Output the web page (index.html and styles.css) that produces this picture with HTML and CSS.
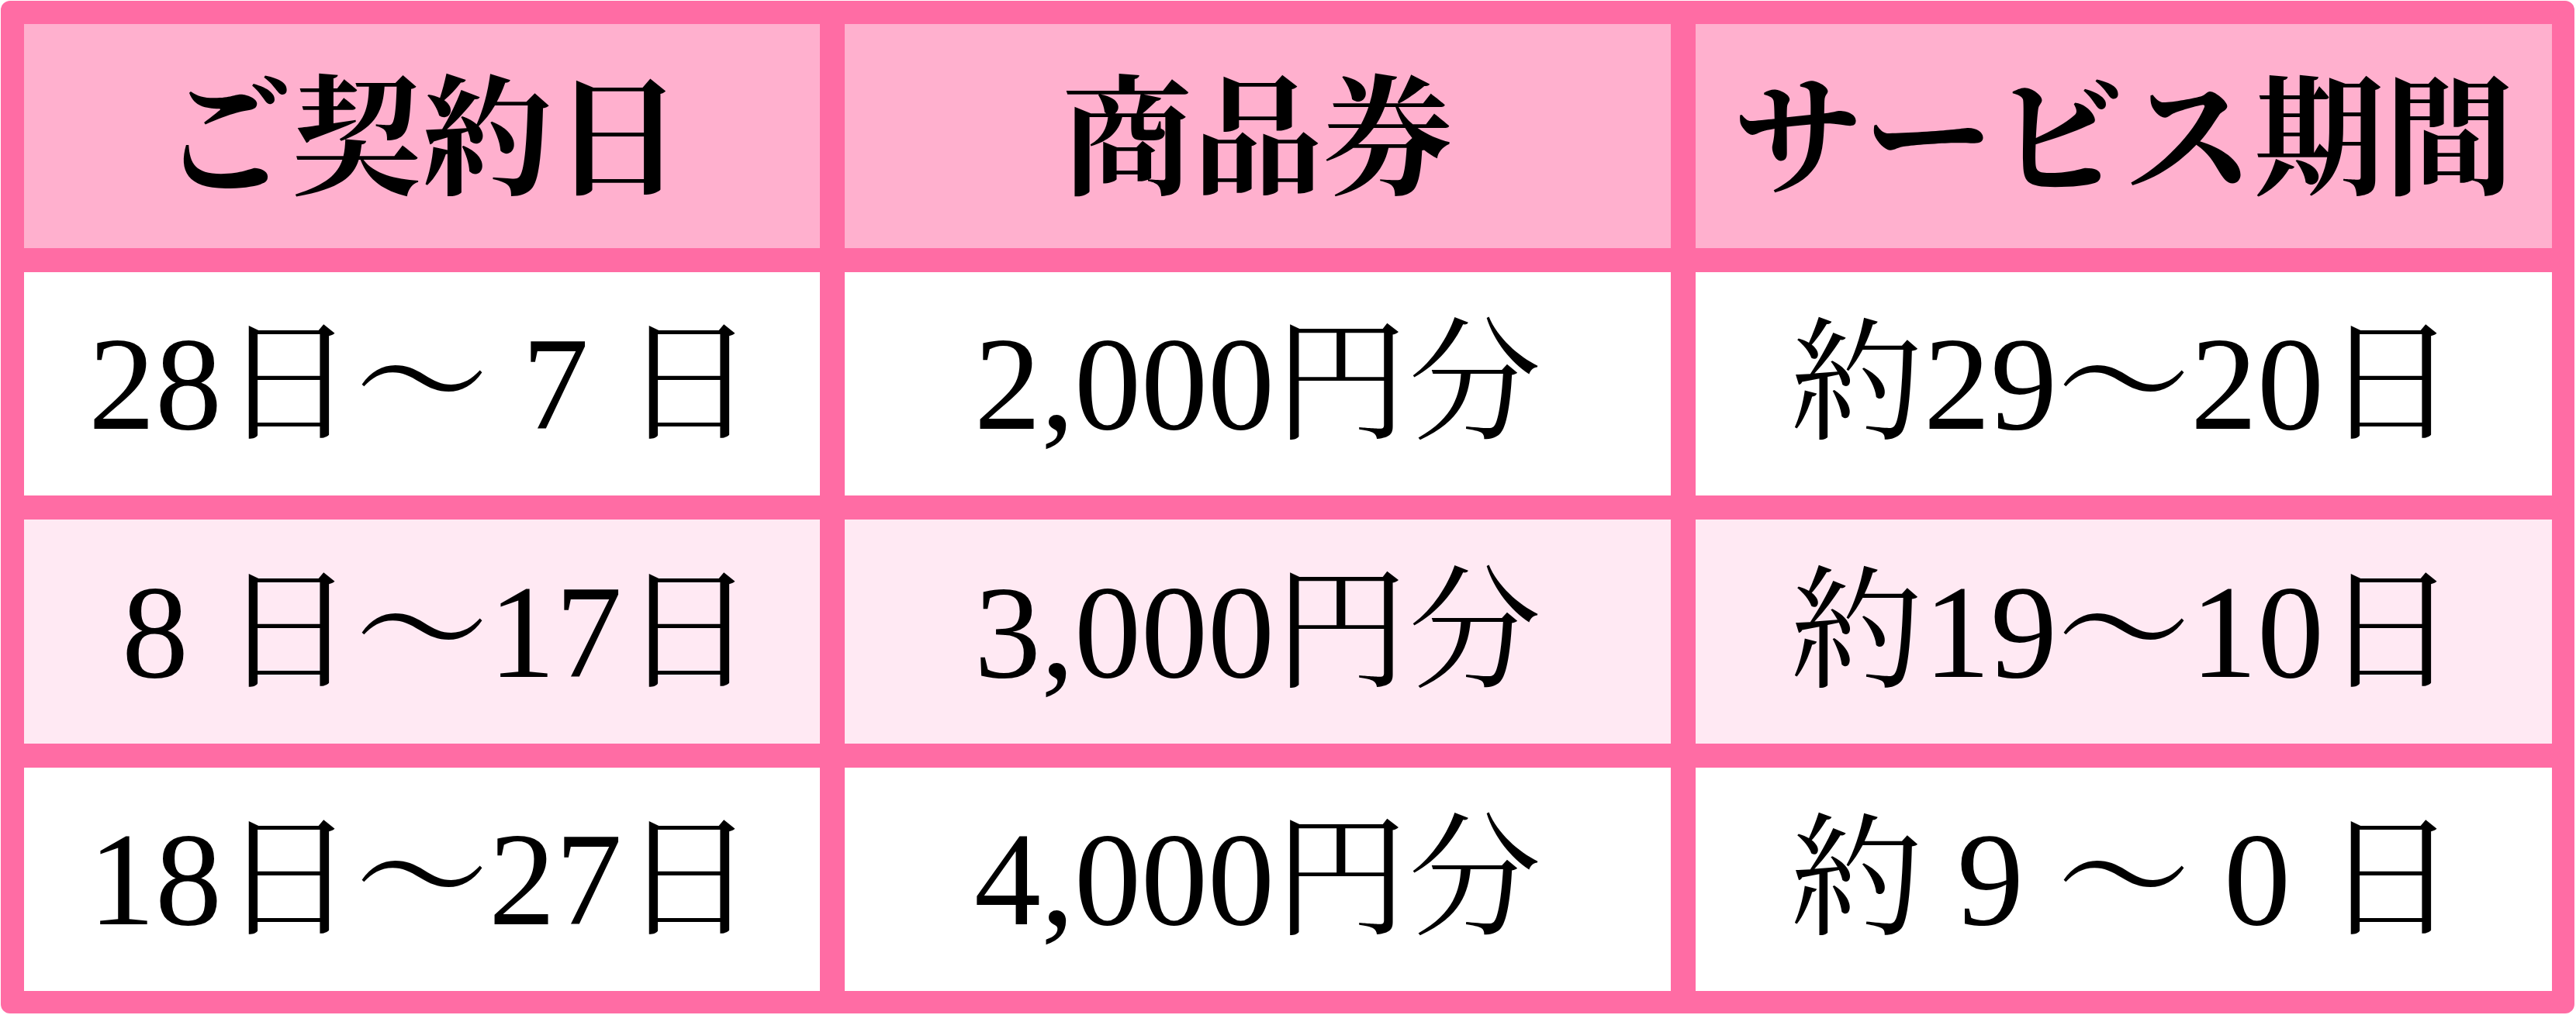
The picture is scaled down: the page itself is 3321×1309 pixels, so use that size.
FILE: index.html
```html
<!DOCTYPE html>
<html lang="ja">
<head>
<meta charset="utf-8">
<title>商品券</title>
<link rel="stylesheet" href="styles.css">
</head>
<body>
<div class="table">
  <div class="cell head">ご契約日</div>
  <div class="cell head">商品券</div>
  <div class="cell head">サービス期間</div>

  <div class="cell">28日～ 7 日</div>
  <div class="cell">2,000円分</div>
  <div class="cell">約29～20日</div>

  <div class="cell alt"> 8 日～17日</div>
  <div class="cell alt">3,000円分</div>
  <div class="cell alt">約19～10日</div>

  <div class="cell">18日～27日</div>
  <div class="cell">4,000円分</div>
  <div class="cell">約 9 ～ 0 日</div>
</div>
</body>
</html>
```
FILE: styles.css
```css
html, body {
  margin: 0;
  padding: 0;
  background: #ffffff;
}

.table {
  margin: 1px 0 0 1px;
  width: 3318px;
  height: 1306px;
  box-sizing: border-box;
  padding: 30px 29px 29px 30px;
  background: #ff6ca4;
  border-radius: 12px;
  display: grid;
  grid-template-columns: 1026px 1065px 1104px;
  grid-template-rows: 289px 288px 289px 288px;
  column-gap: 32px;
  row-gap: 31px;
}

.cell {
  background: #ffffff;
  display: flex;
  align-items: center;
  justify-content: center;
  white-space: pre;
  color: #000000;
  font-family: "Liberation Serif", "Noto Serif CJK JP", "Noto Sans CJK JP", serif;
  font-size: 172px;
  line-height: 1;
}

.head {
  background: #ffb0ce;
  font-family: "Noto Serif CJK JP", "Noto Sans CJK JP", serif;
  font-weight: 700;
  font-size: 168px;
  padding-bottom: 20px;
}

.alt {
  background: #ffe9f3;
}
```
